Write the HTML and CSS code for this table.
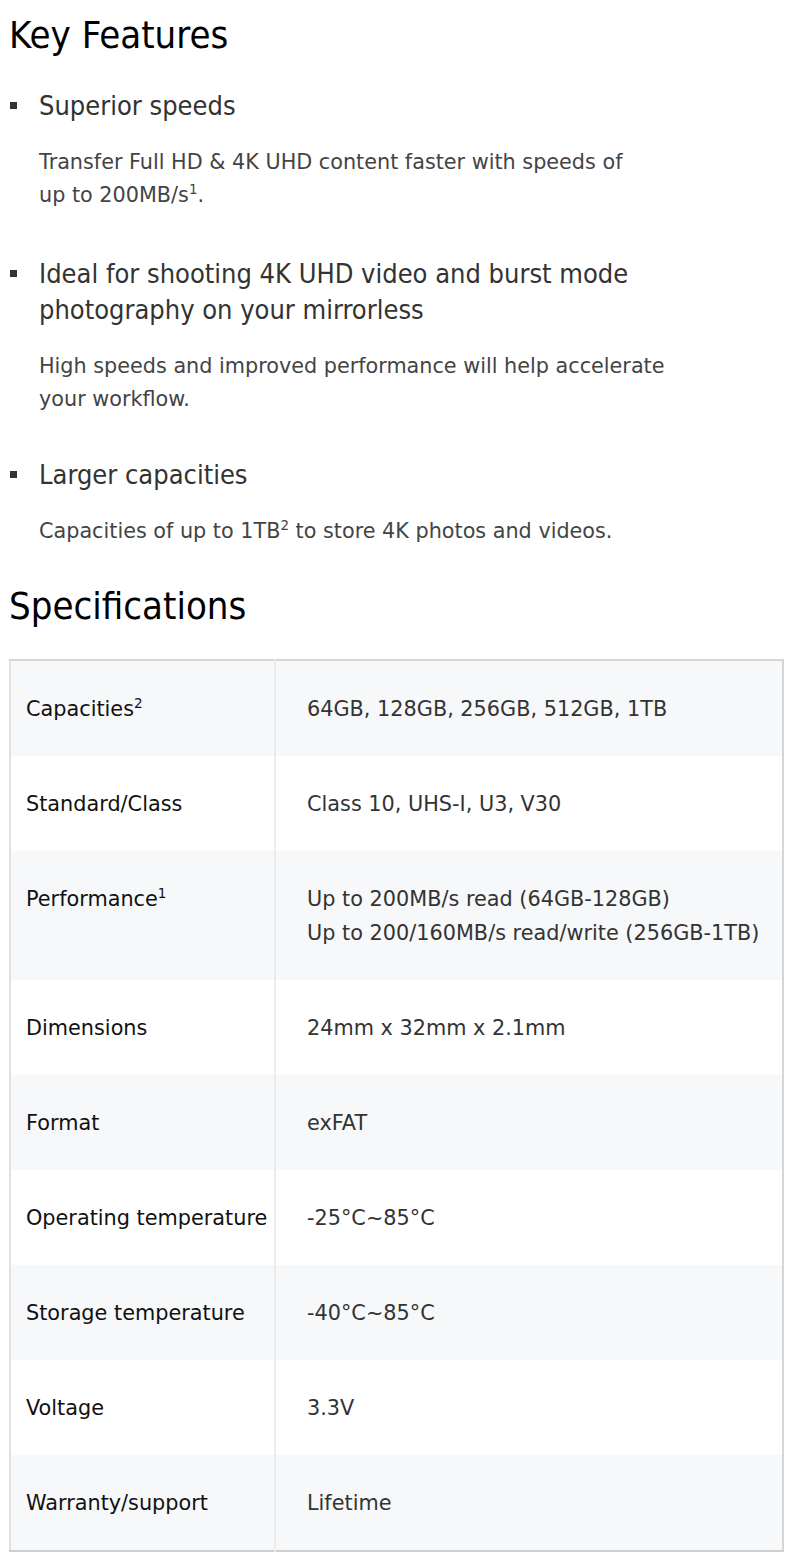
FILE: index.html
```html
<!DOCTYPE html>
<html lang="en">
<head>
  <meta charset="UTF-8">
  <meta name="viewport" content="width=device-width, initial-scale=1.0">
  <title>Key Features</title>
  <link rel="stylesheet" href="styles.css">
</head>
<body>
  <h2 class="section-title">Key Features</h2>
  <ul class="features">
    <li>
      <h3 class="feature-title">Superior speeds</h3>
      <p class="feature-text">Transfer Full HD &amp; 4K UHD content faster with speeds of<br>up to 200MB/s<sup>1</sup>.</p>
    </li>
    <li>
      <h3 class="feature-title">Ideal for shooting 4K UHD video and burst mode<br>photography on your mirrorless</h3>
      <p class="feature-text">High speeds and improved performance will help accelerate<br>your workflow.</p>
    </li>
    <li class="last">
      <h3 class="feature-title">Larger capacities</h3>
      <p class="feature-text">Capacities of up to 1TB<sup>2</sup> to store 4K photos and videos.</p>
    </li>
  </ul>

  <h2 class="section-title specs-title">Specifications</h2>
  <table class="specs">
    <tbody>
      <tr><th>Capacities<sup>2</sup></th><td>64GB, 128GB, 256GB, 512GB, 1TB</td></tr>
      <tr><th>Standard/Class</th><td>Class 10, UHS-I, U3, V30</td></tr>
      <tr><th>Performance<sup>1</sup></th><td>Up to 200MB/s read (64GB-128GB)<br>Up to 200/160MB/s read/write (256GB-1TB)</td></tr>
      <tr><th>Dimensions</th><td>24mm x 32mm x 2.1mm</td></tr>
      <tr><th>Format</th><td>exFAT</td></tr>
      <tr><th>Operating temperature</th><td>-25°C~85°C</td></tr>
      <tr><th>Storage temperature</th><td>-40°C~85°C</td></tr>
      <tr><th>Voltage</th><td>3.3V</td></tr>
      <tr><th>Warranty/support</th><td>Lifetime</td></tr>
    </tbody>
  </table>
</body>
</html>
```

FILE: styles.css
```css
body {
  margin: 0;
  padding: 0 9px;
  background: #fff;
  font-family: "DejaVu Sans Condensed", "DejaVu Sans", sans-serif;
  font-stretch: condensed;
  color: #333;
}
.section-title {
  margin: 0;
  padding-top: 12px;
  font-size: 38px;
  font-weight: normal;
  line-height: 46px;
  color: #000;
}
.features {
  list-style: none;
  margin: 0;
  padding: 0;
}
.features li {
  position: relative;
  padding-left: 30px;
  margin-top: 44px;
}
.features li:first-child {
  margin-top: 30px;
}
.features li.last {
  margin-top: 41px;
}
.features li::before {
  content: "";
  position: absolute;
  left: 1px;
  top: 14px;
  width: 7px;
  height: 7px;
  background: #333;
}
.feature-title {
  margin: 0;
  font-size: 27px;
  font-weight: normal;
  line-height: 36px;
  color: #333;
}
.feature-text {
  margin: 22px 0 0;
  font-family: "DejaVu Sans", sans-serif;
  font-stretch: normal;
  font-size: 20.75px;
  line-height: 33px;
  color: #444;
}
sup {
  font-size: 0.65em;
  line-height: 0;
}
.specs-title {
  padding-top: 35px;
}
.specs {
  width: 100%;
  margin-top: 30px;
  border-collapse: collapse;
  table-layout: fixed;
  border-top: 2px solid #d6d6d6;
  border-bottom: 2px solid #cfcfcf;
  border-left: 2px solid #e2e2e2;
  border-right: 2px solid #d6d6d6;
  font-family: "DejaVu Sans", sans-serif;
  font-stretch: normal;
  font-size: 20.8px;
  line-height: 34px;
}
.specs th, .specs td {
  padding: 31px 15px 30px;
  vertical-align: top;
  text-align: left;
  font-weight: normal;
}
.specs th {
  width: 243px;
  padding-right: 5px;
  white-space: nowrap;
  color: #111;
  border-right: 2px solid #ececec;
}
.specs td {
  padding-left: 31px;
  color: #333;
}
.specs tr:nth-child(odd) {
  background: #f7f8fa;
}
```
